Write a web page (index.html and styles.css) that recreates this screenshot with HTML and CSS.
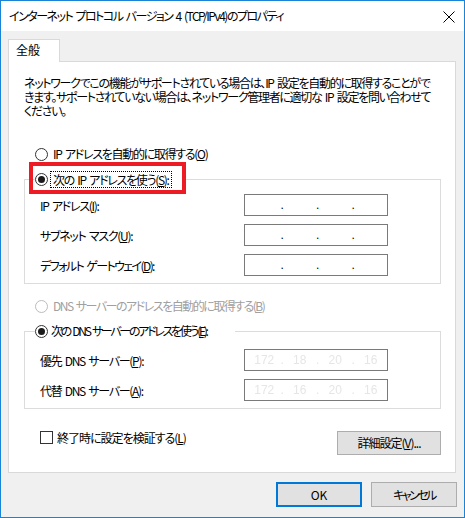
FILE: index.html
```html
<!DOCTYPE html>
<html lang="ja">
<head>
<meta charset="utf-8">
<title>TCP/IPv4 プロパティ</title>
<link rel="stylesheet" href="styles.css">
</head>
<body>
<div class="window">
  <div class="titlebar">
    <span class="title">インターネット プロトコル バージョン 4 (TCP/IPv4)のプロパティ</span>
    <svg class="close" width="12" height="12" viewBox="0 0 12 12"><path d="M0.5 0.5L11.5 11.5M11.5 0.5L0.5 11.5" stroke="#000" stroke-width="1"/></svg>
  </div>
  <div class="client">
    <div class="tab">全般</div>
    <div class="panel">
      <p class="desc">ネットワークでこの機能がサポートされている場合は、IP 設定を自動的に取得することがで<br>きます。サポートされていない場合は、ネットワーク管理者に適切な IP 設定を問い合わせて<br>ください。</p>

      <div class="option option-first"><span class="radio"></span><span>IP アドレスを自動的に取得する(<u>O</u>)</span></div>

      <fieldset class="group group-ip">
        <legend class="legend legend-ip">
          <span class="legend-inner"><span class="radio checked"></span><span class="focus">次の IP アドレスを使う(<u>S</u>):</span></span>
          <span class="highlight"></span>
        </legend>
        <div class="row"><span class="label">IP アドレス(<u>I</u>):</span><div class="ipfield"><span class="seg"></span><span class="dot">.</span><span class="seg"></span><span class="dot">.</span><span class="seg"></span><span class="dot">.</span><span class="seg"></span></div></div>
        <div class="row"><span class="label">サブネット マスク(<u>U</u>):</span><div class="ipfield"><span class="seg"></span><span class="dot">.</span><span class="seg"></span><span class="dot">.</span><span class="seg"></span><span class="dot">.</span><span class="seg"></span></div></div>
        <div class="row"><span class="label label-gateway">デフォルト ゲートウェイ(<u>D</u>):</span><div class="ipfield"><span class="seg"></span><span class="dot">.</span><span class="seg"></span><span class="dot">.</span><span class="seg"></span><span class="dot">.</span><span class="seg"></span></div></div>
      </fieldset>

      <div class="option option-dns disabled"><span class="radio"></span><span class="text-dns-auto">DNS サーバーのアドレスを自動的に取得する(<u>B</u>)</span></div>

      <fieldset class="group group-dns">
        <legend class="legend legend-dns">
          <span class="legend-inner"><span class="radio checked"></span><span class="text-dns-manual">次の DNS サーバーのアドレスを使う(<u>E</u>):</span></span>
        </legend>
        <div class="row"><span class="label label-dns">優先 DNS サーバー(<u>P</u>):</span><div class="ipfield faint"><span class="seg">172</span><span class="dot">.</span><span class="seg">18</span><span class="dot">.</span><span class="seg">20</span><span class="dot">.</span><span class="seg">16</span></div></div>
        <div class="row"><span class="label label-dns">代替 DNS サーバー(<u>A</u>):</span><div class="ipfield faint"><span class="seg">172</span><span class="dot">.</span><span class="seg">16</span><span class="dot">.</span><span class="seg">20</span><span class="dot">.</span><span class="seg">16</span></div></div>
      </fieldset>

      <div class="footer-row">
        <div class="check-wrap"><span class="checkbox"></span><span class="check-text">終了時に設定を検証する(<u>L</u>)</span></div>
        <button class="btn btn-advanced">詳細設定(<u>V</u>)...</button>
      </div>
    </div>
    <div class="dialog-buttons">
      <button class="btn btn-default">OK</button>
      <button class="btn btn-cancel">キャンセル</button>
    </div>
  </div>
</div>
</body>
</html>
```

FILE: styles.css
```css
* { box-sizing: border-box; }

html, body {
  margin: 0;
  padding: 0;
  background: #ffffff;
}

body {
  font-family: "Noto Sans CJK JP", "Noto Sans", sans-serif;
  font-size: 12px;
  font-feature-settings: "palt";
  letter-spacing: -1.3px;
  word-spacing: 2px;
  color: #000;
}

.window {
  width: 465px;
  height: 518px;
  border: 1px solid #1883d7;
  background: #f0f0f0;
  display: flex;
  flex-direction: column;
}

.titlebar {
  height: 30px;
  background: #ffffff;
  display: flex;
  align-items: center;
  justify-content: space-between;
  padding: 0 9px 0 8px;
  flex: none;
}

.title {
  line-height: 16px;
  letter-spacing: -1.5px;
}

.close {
  display: block;
  margin-top: 1px;
}

.client {
  padding: 8px 7px 0 7px;
  display: flex;
  flex-direction: column;
}

.tab {
  width: 52px;
  height: 23px;
  background: #ffffff;
  border: 1px solid #d9d9d9;
  border-bottom: none;
  margin-bottom: -1px;
  position: relative;
  z-index: 1;
  padding-left: 7px;
  line-height: 20px;
  letter-spacing: 0;
}

.panel {
  margin-right: 1px;
  background: #ffffff;
  border: 1px solid #d9d9d9;
  padding: 0 14px 17px 15px;
  display: flex;
  flex-direction: column;
}

.desc {
  margin: 14px 0 0 0;
  line-height: 14px;
  white-space: nowrap;
}

.option {
  display: flex;
  align-items: center;
  height: 16px;
  line-height: 16px;
  gap: 5px;
  padding-left: 11px;
}

.option-first { margin-top: 28px; }
.option-dns { margin-top: 14px; }

.disabled { color: #a0a0a0; }

.text-dns-auto { letter-spacing: -1.5px; }
.text-dns-manual { letter-spacing: -2.3px; }
.label-dns { letter-spacing: -1.3px; }
.label-gateway { letter-spacing: -1.6px; }
.check-text { letter-spacing: -1px; }

.radio {
  width: 13px;
  height: 13px;
  border: 1px solid #333333;
  border-radius: 50%;
  background: #ffffff;
  flex: none;
  position: relative;
}

.disabled .radio { border-color: #bcbcbc; }

.radio.checked::after {
  content: "";
  position: absolute;
  left: 2px;
  top: 2px;
  width: 7px;
  height: 7px;
  border-radius: 50%;
  background: #1b1b1b;
}

.group {
  margin: 9px 0 0 0;
  padding: 0 0 7px 0;
  border: 1px solid #dcdcdc;
  min-width: 0;
}

.group-ip { padding-top: 7px; }
.group-dns { padding-top: 10px; }

.legend {
  margin-left: 10px;
  padding: 0;
  height: 16px;
  position: relative;
}

.legend-ip { padding-right: 14px; }
.legend-dns { padding-right: 28px; }

.legend-inner {
  display: flex;
  align-items: center;
  gap: 3px;
  height: 16px;
  line-height: 16px;
}

.focus {
  outline: 1px dotted #000;
  outline-offset: 0;
  padding: 0 2px 0 2px;
  line-height: 15px;
}

.highlight {
  position: absolute;
  left: -6px;
  top: -9px;
  width: 157px;
  height: 32px;
  border: 4px solid #ed1c24;
  pointer-events: none;
}

.row {
  display: flex;
  align-items: center;
  justify-content: space-between;
  height: 22px;
  padding: 0 52px 0 15px;
}

.row + .row { margin-top: 8px; }

.label {
  line-height: 16px;
  padding-top: 1px;
}

.ipfield {
  width: 144px;
  height: 22px;
  border: 1px solid #7a7a7a;
  background: #ffffff;
  display: flex;
  align-items: center;
  padding-left: 3px;
  line-height: 16px;
  font-family: "Liberation Sans", "Noto Sans", sans-serif;
  font-feature-settings: normal;
  letter-spacing: 0;
  word-spacing: 0;
}

.seg {
  flex: 1;
  text-align: center;
}

.dot {
  width: 3px;
  text-align: center;
}

.faint {
  color: #e6e6e6;
}

.faint .seg, .faint .dot {
  filter: blur(0.5px);
}

.footer-row {
  margin-top: 22px;
  display: flex;
  justify-content: space-between;
  align-items: flex-start;
}

.check-wrap {
  display: flex;
  align-items: center;
  height: 13px;
  line-height: 13px;
  gap: 4px;
  padding-left: 16px;
}

.checkbox {
  width: 13px;
  height: 13px;
  border: 1px solid #333333;
  background: #ffffff;
  flex: none;
}

.btn {
  font: inherit;
  font-feature-settings: "palt";
  letter-spacing: -1px;
  color: #000;
  background: #e1e1e1;
  border: 1px solid #adadad;
  width: 86px;
  height: 25px;
  padding: 0;
  line-height: 16px;
  margin: 0;
}

.btn-advanced {
  width: 104px;
  height: 24px;
}

.btn-default {
  border: 2px solid #0078d7;
  letter-spacing: 0;
}

.btn-cancel {
  letter-spacing: -2.5px;
}

.dialog-buttons {
  margin-top: 9px;
  display: flex;
  justify-content: flex-end;
  gap: 9px;
}
```
